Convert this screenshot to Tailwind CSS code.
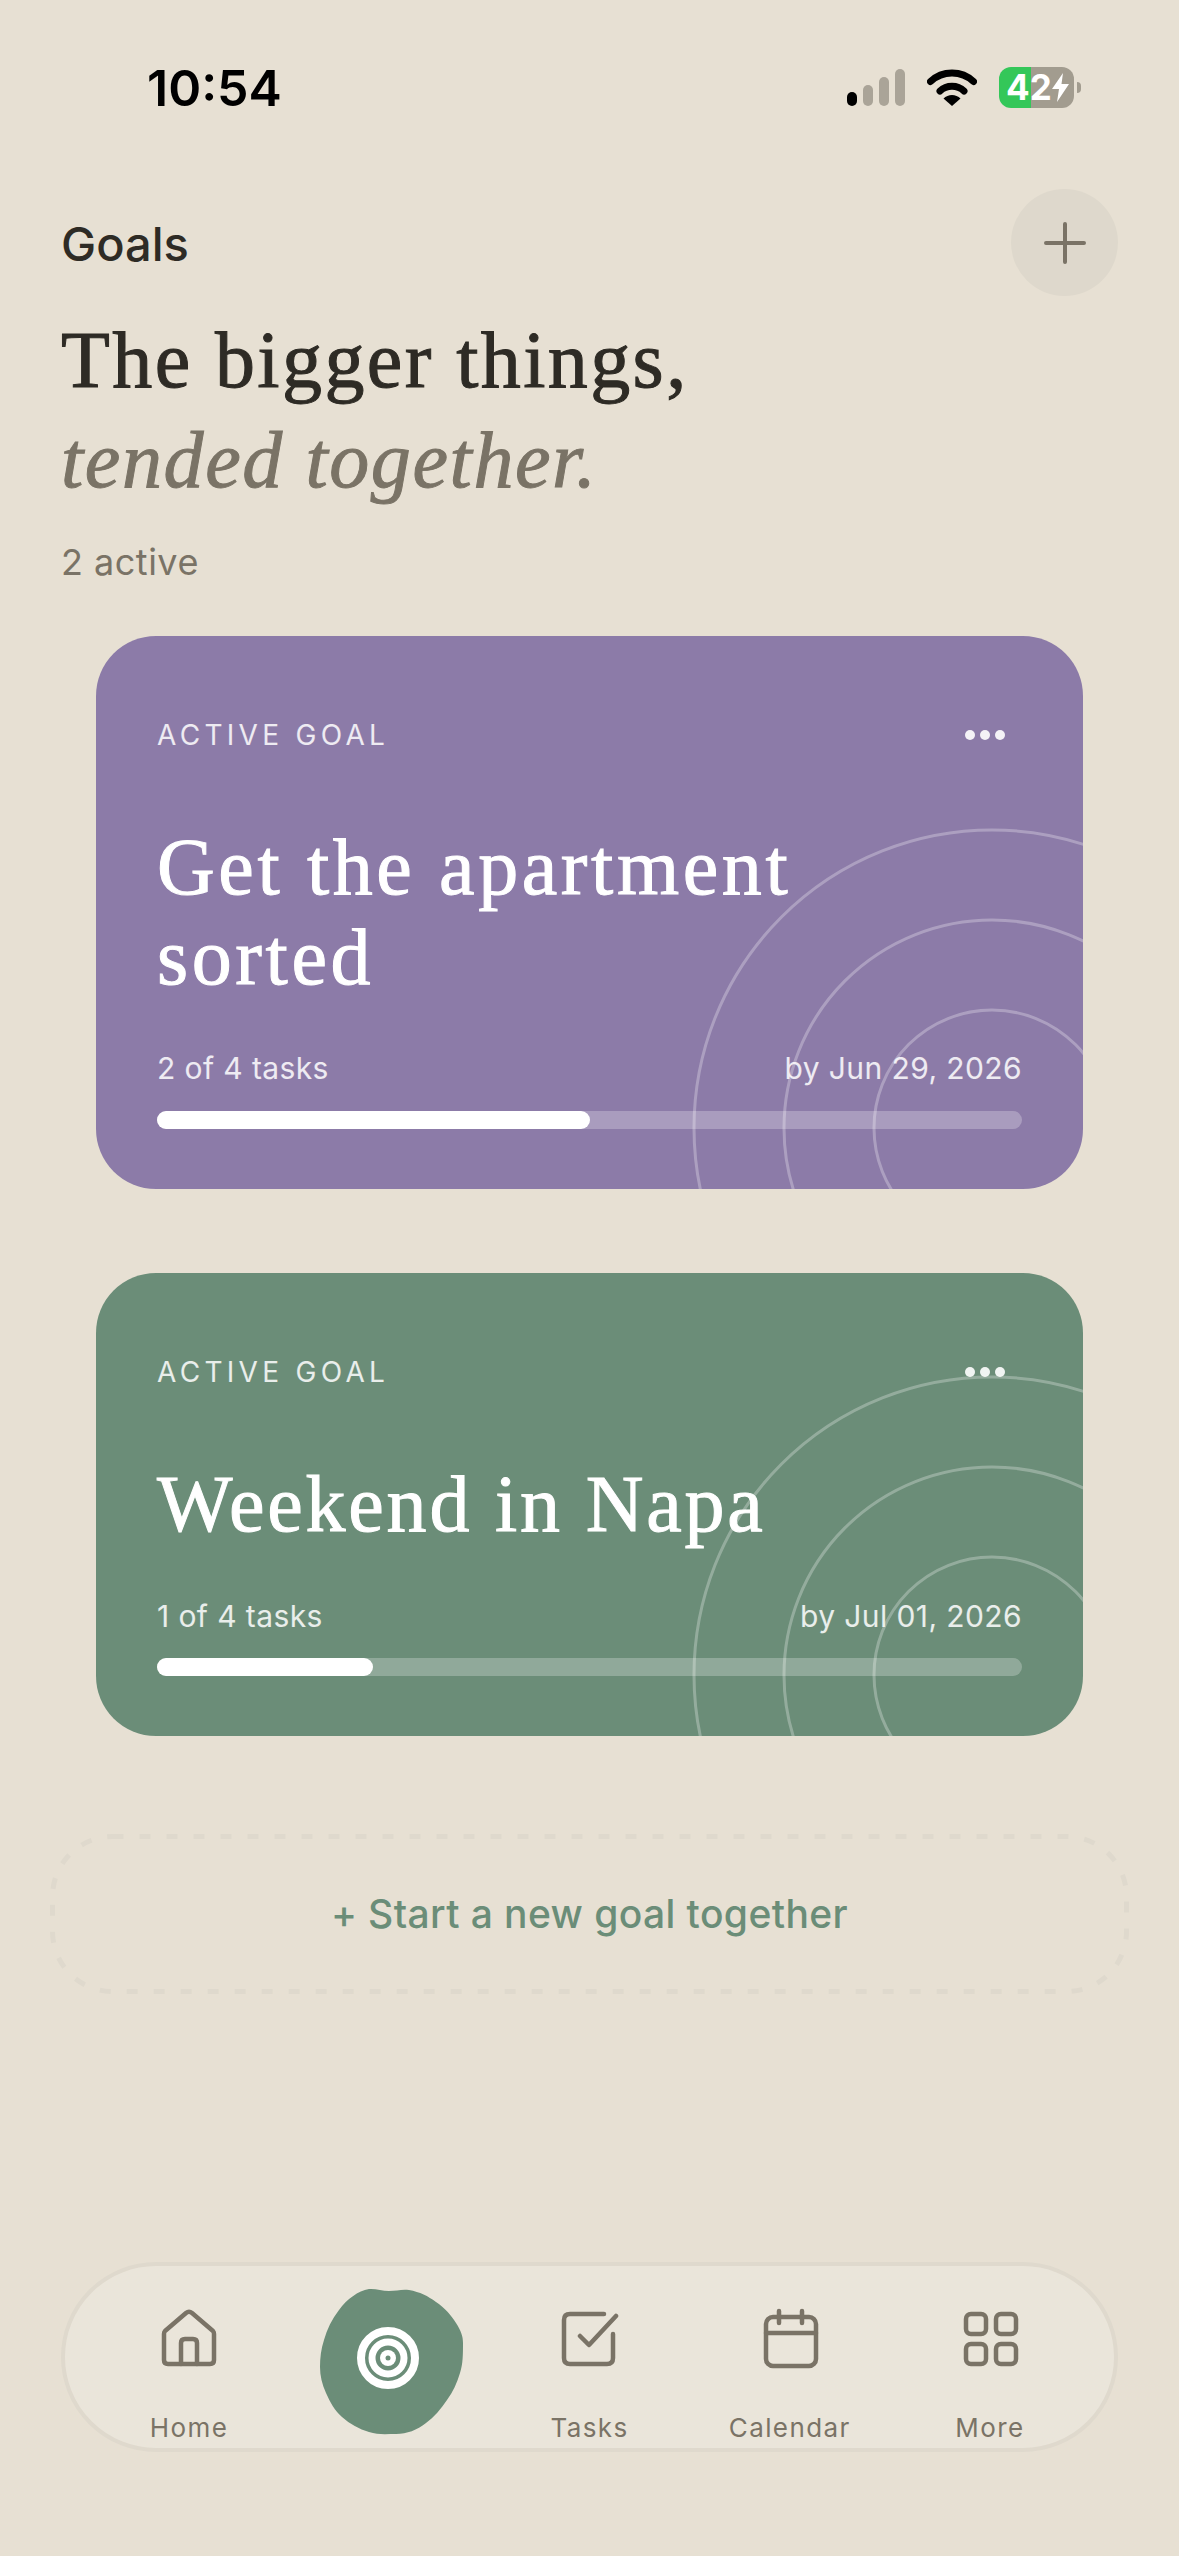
<!DOCTYPE html>
<html lang="en">
<head>
<meta charset="UTF-8">
<meta name="viewport" content="width=device-width, initial-scale=1.0">
<title>Goals</title>
<script src="https://cdn.jsdelivr.net/npm/@tailwindcss/browser@4"></script>
</head>
<body class="bg-[#e7e0d3] font-['Inter',sans-serif] antialiased overflow-hidden">
<div class="flex flex-col w-[1179px] h-[2556px] bg-[#e7e0d3] text-[#2e2b25]">

  <!-- status bar -->
  <div class="flex items-center justify-between h-[175px] pl-[147px] pr-[98px]">
    <span class="text-[50px] font-semibold leading-none text-black">10:54</span>
    <div class="flex items-center gap-[22px]">
      <div class="flex items-end gap-[6px] h-[37px]">
        <span class="w-[10px] h-[14px] rounded-full bg-black"></span>
        <span class="w-[10px] h-[21px] rounded-full bg-[#aaa498]"></span>
        <span class="w-[10px] h-[29px] rounded-full bg-[#aaa498]"></span>
        <span class="w-[10px] h-[37px] rounded-full bg-[#aaa498]"></span>
      </div>
      <svg class="w-[50px] h-[37px]" viewBox="0 0 50 37" fill="none" stroke="black" stroke-width="7" stroke-linecap="round">
        <path d="M3.5 12.5C15.5 1.2 34.5 1.2 46.5 12.5"/>
        <path d="M13 22C19.5 15.8 30.5 15.8 37 22"/>
        <path d="M16.5 29.5L25 37L33.5 29.5C29 24.7 21 24.7 16.5 29.5Z" fill="black" stroke="none"/>
      </svg>
      <div class="flex items-center gap-[3px]">
        <div class="flex items-center w-[75px] h-[41px] rounded-[12px] overflow-hidden bg-[linear-gradient(90deg,#34c759_0,#34c759_32px,#a29c8f_32px,#a29c8f_100%)] pl-[7px] text-white text-[35px] font-bold leading-none">
          <span>42</span>
          <svg class="w-[17px] h-[29px] shrink-0" viewBox="0 0 17 29" fill="white"><path d="M11 0L0 16H7L5 29L17 11H9.5Z"/></svg>
        </div>
        <span class="w-[4px] h-[11px] rounded-r-full bg-[#a29c8f]"></span>
      </div>
    </div>
  </div>

  <!-- header -->
  <header class="flex items-start justify-between px-[61px] pt-[14px]">
    <h1 class="text-[47px] font-medium leading-[56px] mt-[27px] text-[#2e2b25]">Goals</h1>
    <button class="flex items-center justify-center w-[107px] h-[107px] rounded-full bg-[#ded8cc]">
      <svg class="w-[42px] h-[42px]" viewBox="0 0 42 42" fill="none" stroke="#7a7366" stroke-width="4" stroke-linecap="round"><path d="M21 2V40M2 21H40"/></svg>
    </button>
  </header>
  <div class="pl-[61px] mt-[14px]">
    <h2 class="font-['Liberation_Serif',serif] text-[80px] leading-[100px] tracking-[2.4px] [-webkit-text-stroke:1px] text-[#2e2b25]">The bigger things,<br><em class="text-[#7a7366] tracking-[1.6px]">tended together.</em></h2>
    <p class="text-[36px] leading-[48px] mt-[28px] text-[#7a7366] tracking-[0.5px]">2 active</p>
  </div>

  <!-- goal cards -->
  <div class="flex flex-col gap-[84px] mx-[96px] mt-[50px] text-white">
    <article class="relative overflow-hidden rounded-[60px] bg-[#8c7ba8] px-[61px] pb-[60px]">
      <svg class="absolute left-0 top-0 w-full h-full" fill="none" stroke="white" stroke-opacity="0.28" stroke-width="3">
        <circle cx="896" cy="492" r="298"/><circle cx="896" cy="492" r="208"/><circle cx="896" cy="492" r="118"/>
      </svg>
      <div class="relative flex items-center justify-between h-[78px] mt-[60px]">
        <span class="text-[28px] leading-[42px] tracking-[4.3px] text-white/85">ACTIVE GOAL</span>
        <div class="flex gap-[5px] mr-[17px]"><i class="w-[10px] h-[10px] rounded-full bg-white/90"></i><i class="w-[10px] h-[10px] rounded-full bg-white/90"></i><i class="w-[10px] h-[10px] rounded-full bg-white/90"></i></div>
      </div>
      <h3 class="relative font-['Liberation_Serif',serif] text-[80px] leading-[90px] tracking-[3.6px] [-webkit-text-stroke:1px] mt-[48px]">Get the apartment<br>sorted</h3>
      <div class="relative flex justify-between text-[30px] leading-[40px] mt-[46px] text-white/85 tracking-[0.4px]"><span>2 of 4 tasks</span><span>by Jun 29, 2026</span></div>
      <div class="relative h-[18px] mt-[23px] rounded-full bg-white/25"><div class="h-full rounded-full bg-white" style="width:50%"></div></div>
    </article>

    <article class="relative overflow-hidden rounded-[60px] bg-[#6b8d78] px-[61px] pb-[60px]">
      <svg class="absolute left-0 top-0 w-full h-full" fill="none" stroke="white" stroke-opacity="0.28" stroke-width="3">
        <circle cx="896" cy="402" r="298"/><circle cx="896" cy="402" r="208"/><circle cx="896" cy="402" r="118"/>
      </svg>
      <div class="relative flex items-center justify-between h-[78px] mt-[60px]">
        <span class="text-[28px] leading-[42px] tracking-[4.3px] text-white/85">ACTIVE GOAL</span>
        <div class="flex gap-[5px] mr-[17px]"><i class="w-[10px] h-[10px] rounded-full bg-white/90"></i><i class="w-[10px] h-[10px] rounded-full bg-white/90"></i><i class="w-[10px] h-[10px] rounded-full bg-white/90"></i></div>
      </div>
      <h3 class="relative font-['Liberation_Serif',serif] text-[80px] leading-[90px] tracking-[2.8px] [-webkit-text-stroke:1px] mt-[48px]">Weekend in Napa</h3>
      <div class="relative flex justify-between text-[30px] leading-[40px] mt-[47px] text-white/85 tracking-[0.4px]"><span>1 of 4 tasks</span><span>by Jul 01, 2026</span></div>
      <div class="relative h-[18px] mt-[22px] rounded-full bg-white/25"><div class="h-full rounded-full bg-white" style="width:25%"></div></div>
    </article>
  </div>

  <!-- new goal -->
  <button class="relative flex items-center justify-center h-[160px] mx-[50px] mt-[98px] text-[39px] tracking-[0.4px] font-medium text-[#6b8d78]">
    <svg class="absolute left-0 top-0 w-full h-full" fill="none" stroke="#dfd9cd" stroke-width="5" stroke-dasharray="11 16"><rect x="2.5" y="2.5" width="1074" height="155" rx="60"/></svg>
    <span class="relative">+ Start a new goal together</span>
  </button>

  <!-- bottom nav -->
  <nav class="grid grid-cols-5 h-[190px] mx-[61px] mt-auto mb-[104px] px-[24px] pt-[41px] rounded-full bg-[#eae5da] border-[4px] border-[#dfd9cd] text-[#7a7366] text-[26px] tracking-[1.4px]">
    <a class="flex flex-col items-center">
      <svg class="w-[60px] h-[60px]" viewBox="0 0 60 60" fill="none" stroke="#7a7366" stroke-width="4.5" stroke-linecap="round" stroke-linejoin="round"><path d="M6 24L27 6Q30 3.5 33 6L54 24Q55 25 55 27V53Q55 57 51 57H9Q5 57 5 53V27Q5 25 6 24Z"/><path d="M22 57V36Q22 32 26 32H34Q38 32 38 36V57"/></svg>
      <span class="mt-[44px] leading-[34px]">Home</span>
    </a>
    <a class="flex justify-center">
      <svg class="w-[143px] h-[145px] -mt-[18px] ml-[5px] shrink-0 overflow-visible" viewBox="0 0 143 145">
        <path fill="#6b8d78" d="M49 0C56 -0.5 62 2 69 2C76 2 82 0 89 1C100 3 108 7 116 13C125 19 131 26 136 34C141 42 143 47 143 54C143 65 143 75 140 84C137 94 133 103 127 111C121 120 114 128 106 134C97 141 87 145 76 145C66 145 58 146 49 143C39 140 30 135 22 128C15 122 10 113 6 104C2 95 0 87 0 78C0 69 1 60 4 51C7 40 12 30 19 21C27 10 38 2 49 0Z"/>
        <g fill="none" stroke="white"><circle cx="68" cy="69" r="27" stroke-width="8"/><circle cx="68" cy="69" r="16" stroke-width="7"/></g>
        <circle cx="68" cy="69" r="8" fill="white"/><circle cx="68" cy="69" r="2.5" fill="#6b8d78"/>
      </svg>
    </a>
    <a class="flex flex-col items-center">
      <svg class="w-[60px] h-[60px]" viewBox="0 0 60 60" fill="none" stroke="#7a7366" stroke-width="4.5" stroke-linecap="round" stroke-linejoin="round"><path d="M45 7H11Q5 7 5 13V51Q5 57 11 57H48Q54 57 54 51V27"/><path d="M21 29L30 38L57 9"/></svg>
      <span class="mt-[44px] leading-[34px]">Tasks</span>
    </a>
    <a class="flex flex-col items-center">
      <svg class="w-[60px] h-[60px] overflow-visible" viewBox="0 0 60 60" fill="none" stroke="#7a7366" stroke-width="4.5" stroke-linecap="round" stroke-linejoin="round"><rect x="6" y="10" width="50" height="49" rx="7"/><path d="M6 26H56M19 4V16M42 4V16"/></svg>
      <span class="mt-[44px] leading-[34px]">Calendar</span>
    </a>
    <a class="flex flex-col items-center">
      <svg class="w-[60px] h-[60px]" viewBox="0 0 60 60" fill="none" stroke="#7a7366" stroke-width="4.5" stroke-linejoin="round"><rect x="6" y="7" width="20" height="20" rx="5"/><rect x="36" y="7" width="20" height="20" rx="5"/><rect x="6" y="37" width="20" height="20" rx="5"/><rect x="36" y="37" width="20" height="20" rx="5"/></svg>
      <span class="mt-[44px] leading-[34px]">More</span>
    </a>
  </nav>
</div>
</body>
</html>
